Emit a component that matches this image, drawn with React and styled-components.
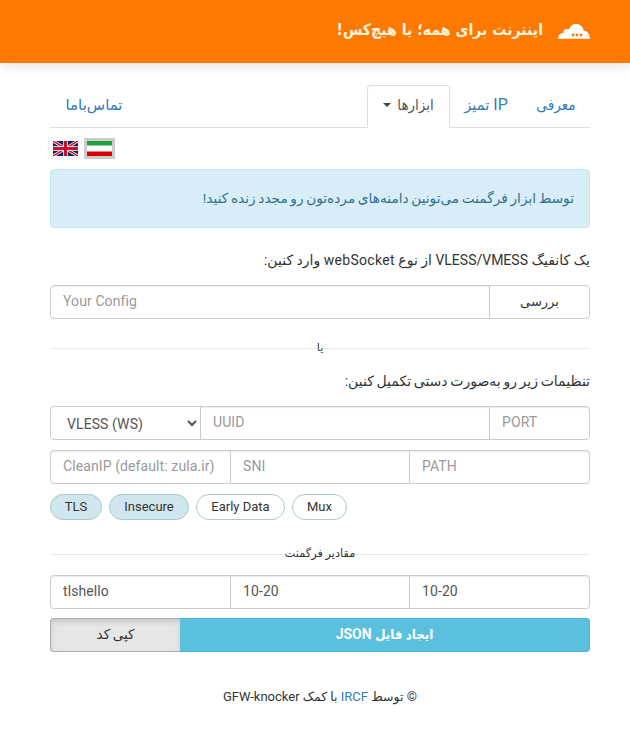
import React from "react";
import styled, { createGlobalStyle, css } from "styled-components";

const GlobalStyle = createGlobalStyle`
  *, *::before, *::after { box-sizing: border-box; }
  body {
    margin: 0;
    background: #fff;
    color: #333;
    font-family: Roboto, "DejaVu Sans", sans-serif;
    font-size: 14px;
    line-height: 20px;
  }
  input, select, button { font: inherit; margin: 0; }
`;

const Page = styled.div`
  height: 729px;
  overflow: hidden;
`;

const Header = styled.header`
  height: 63px;
  padding: 0 40px;
  display: flex;
  align-items: center;
  gap: 15px;
  background: #ff7900;
  box-shadow: 0 0 14px rgba(0, 0, 0, 0.16);
`;

const Title = styled.h1`
  margin: 0;
  padding-bottom: 3px;
  color: #fff3dc;
  font-size: 16px;
  font-weight: 700;
  line-height: 24px;
`;

const Fa = styled.span`
  font-size: ${(p) => p.$size || 14}px;
  word-spacing: ${(p) => p.$space ?? -0.8}px;
  ${(p) => p.$narrow && css`
    font-family: "DejaVu Sans Condensed", "DejaVu Sans", sans-serif;
    font-stretch: condensed;
  `}
`;

const Latin = styled.span`
  letter-spacing: 0.3px;
`;

const Container = styled.main`
  width: 540px;
  margin: 22px 40px 0 50px;
`;

const Tabs = styled.nav`
  display: flex;
  height: 43px;
  border-bottom: 1px solid #ddd;
`;

const Tab = styled.a`
  display: flex;
  align-items: center;
  justify-content: center;
  width: ${(p) => p.$width}px;
  height: 43px;
  padding-bottom: 3px;
  border: 1px solid transparent;
  border-radius: 4px 4px 0 0;
  color: #337ab7;
  font-size: 16px;
  white-space: nowrap;
  ${(p) =>
    p.$active &&
    css`
      gap: 6px;
      color: #555;
      background: #fff;
      border-color: #ddd #ddd #fff;
    `}
  ${(p) => p.$last && css`margin-right: auto;`}
`;

const Caret = styled.span`
  border: 4px solid transparent;
  border-top-color: #444;
  border-bottom: 0;
`;

const Languages = styled.div`
  display: flex;
  flex-direction: row-reverse;
  justify-content: flex-end;
  direction: ltr;
  gap: 3px;
  margin-top: 10px;
  height: 21px;
`;

const Language = styled.button`
  display: flex;
  width: 31px;
  height: 21px;
  padding: 3px;
  border: 0;
  background: ${(p) => (p.$active ? "#ccc" : "transparent")};
`;

const Alert = styled.div`
  height: 59px;
  margin-top: 10px;
  padding: 18px 15px;
  border: 1px solid #bce8f1;
  border-radius: 4px;
  background: #d9edf7;
  color: #31708f;
`;

const Label = styled.div`
  height: 24px;
  margin-top: ${(p) => p.$top}px;
  line-height: 24px;
  white-space: nowrap;
`;

const Group = styled.div`
  display: flex;
  direction: ltr;
  height: 34px;
  margin-top: ${(p) => p.$top}px;
`;

const cell = css`
  width: ${(p) => p.$width}px;
  height: 34px;
  border: 1px solid #ccc;
  border-radius: 0;
  background: #fff;
  letter-spacing: 0.1px;
  &:first-child { border-radius: 4px 0 0 4px; }
  &:last-child { border-radius: 0 4px 4px 0; }
  &:not(:first-child) { margin-left: -1px; }
`;

const Input = styled.input`
  ${cell}
  padding: 4px 12px 6px;
  color: #555;
  outline: 0;
  box-shadow: inset 0 1px 1px rgba(0, 0, 0, 0.075);
  &::placeholder { color: #999; opacity: 1; }
`;

const Select = styled.select`
  ${cell}
  padding: 6px 0 4px 12px;
  color: #555;
`;

const CheckButton = styled.button`
  ${cell}
  padding: 0 0 2px;
  color: #333;
  letter-spacing: 0;
`;

const Divider = styled.div`
  display: flex;
  align-items: center;
  height: 20px;
  margin-top: ${(p) => p.$top}px;
  white-space: nowrap;
  &::before, &::after {
    content: "";
    flex: 1;
    height: 1px;
    background: #eaeaea;
  }
`;

const Pills = styled.div`
  display: flex;
  direction: ltr;
  gap: 7px;
  margin-top: 10px;
`;

const Pill = styled.button`
  width: ${(p) => p.$width}px;
  height: 26px;
  padding: 0;
  border: 1px solid #a9c9d6;
  border-radius: 13px;
  background: ${(p) => (p.$on ? "#d1e5ed" : "#fff")};
  color: #333;
  font-size: 13px;
  line-height: 24px;
`;

const Action = styled.button`
  height: 34px;
  padding: 0 0 2px;
  border: 1px solid #adadad;
  ${(p) =>
    p.$primary
      ? css`
          width: 410px;
          border-color: #46b8da;
          border-left: 0;
          border-radius: 0 4px 4px 0;
          background: #5bc0de;
          color: #fff;
          font-weight: 700;
        `
      : css`
          width: 130px;
          border-right: 0;
          border-radius: 4px 0 0 4px;
          background: #e6e6e6;
          color: #333;
          box-shadow: inset 0 3px 5px rgba(0, 0, 0, 0.125);
        `}
`;

const Footer = styled.footer`
  margin-top: 35px;
  text-align: center;
  font-size: 13px;
  a { color: #337ab7; }
`;

const Cloud = () => (
  <svg width="32" height="16" viewBox="0 0 32 16">
    <path d="M0 14.7C0 11 2.5 8.8 5.4 8.9C5 5.8 8.4 4 10.7 5.6C12.2 2 14.6 0 18 0C22 0 24.9 2.5 25.7 6.6C29.4 6.9 31.7 10 31.8 14.7Z" fill="#fff" />
    <circle cx="15" cy="11" r="1.4" fill="#ff7900" />
    <circle cx="19" cy="11" r="1.4" fill="#ff7900" />
    <circle cx="23" cy="11" r="1.4" fill="#ff7900" />
  </svg>
);

const IranFlag = () => (
  <svg width="25" height="15" viewBox="0 0 25 15">
    <rect width="25" height="15" fill="#fff" />
    <rect width="25" height="4" fill="#239f40" />
    <rect y="4" width="25" height="1" fill="#90cf9f" />
    <rect y="10" width="25" height="1" fill="#ed8080" />
    <rect y="11" width="25" height="4" fill="#da0000" />
  </svg>
);

const UkFlag = () => (
  <svg width="25" height="15" viewBox="0 0 50 30">
    <rect width="50" height="30" fill="#012169" />
    <path d="M0 0L50 30M50 0L0 30" stroke="#fff" strokeWidth="6" />
    <path d="M0 0L25 15M50 30L25 15M50 0L25 15M0 30L25 15" stroke="#c8102e" strokeWidth="3" />
    <path d="M25 0V30M0 15H50" stroke="#fff" strokeWidth="9" />
    <path d="M25 0V30M0 15H50" stroke="#c8102e" strokeWidth="6" />
  </svg>
);

export default function App() {
  return (
    <Page dir="rtl" lang="fa">
      <GlobalStyle />
      <Header>
        <Cloud />
        <Title><Fa $size={15.7} $space={0} $narrow>اینترنت برای همه؛ یا هیچ‌کس!</Fa></Title>
      </Header>
      <Container>
        <Tabs>
          <Tab $width={68}><Fa $size={15.2} $narrow>معرفی</Fa></Tab>
          <Tab $width={72}><span>IP <Fa $size={14.7}>تمیز</Fa></span></Tab>
          <Tab $width={83} $active><Fa $size={15} $narrow>ابزارها</Fa><Caret /></Tab>
          <Tab $width={88} $last><Fa $size={15}>تماس‌باما</Fa></Tab>
        </Tabs>
        <Languages>
          <Language $active aria-label="فارسی"><IranFlag /></Language>
          <Language aria-label="English"><UkFlag /></Language>
        </Languages>
        <Alert><Fa $size={13.7}>توسط ابزار فرگمنت می‌تونین دامنه‌های مرده‌تون رو مجدد زنده کنید!</Fa></Alert>
        <Label $top={20}>
          <Fa $space={0}>یک کانفیگ</Fa> VLESS/VMESS <Fa $space={0}>از نوع</Fa> <Latin>webSocket</Latin> <Fa $space={0}>وارد کنین:</Fa>
        </Label>
        <Group $top={13}>
          <Input $width={440} placeholder="Your Config" />
          <CheckButton $width={101}><Fa $size={13}>بررسی</Fa></CheckButton>
        </Group>
        <Divider $top={19}><Fa $size={11}>یا</Fa></Divider>
        <Label $top={11}><Fa>تنظیمات زیر رو به‌صورت دستی تکمیل کنین:</Fa></Label>
        <Group $top={13}>
          <Select $width={151} defaultValue="vless">
            <option value="vless">VLESS (WS)</option>
          </Select>
          <Input $width={290} placeholder="UUID" />
          <Input $width={101} placeholder="PORT" />
        </Group>
        <Group $top={10}>
          <Input $width={181} placeholder="CleanIP (default: zula.ir)" />
          <Input $width={180} placeholder="SNI" />
          <Input $width={181} placeholder="PATH" />
        </Group>
        <Pills>
          <Pill $width={52} $on>TLS</Pill>
          <Pill $width={80} $on>Insecure</Pill>
          <Pill $width={89}>Early Data</Pill>
          <Pill $width={55}>Mux</Pill>
        </Pills>
        <Divider $top={24}><Fa $size={11.3} $space={0}>مقادیر فرگمنت</Fa></Divider>
        <Group $top={11}>
          <Input $width={181} defaultValue="tlshello" />
          <Input $width={180} defaultValue="10-20" />
          <Input $width={181} defaultValue="10-20" />
        </Group>
        <Group $top={9}>
          <Action><Fa $size={13.5}>کپی کد</Fa></Action>
          <Action $primary dir="rtl"><Fa $size={13.2} $narrow>ایجاد فایل</Fa> JSON</Action>
        </Group>
        <Footer>
          © <Fa $size={12.5} $space={0}>توسط</Fa> <a>IRCF</a> <Fa $size={12.5} $space={0}>با کمک</Fa> GFW-knocker
        </Footer>
      </Container>
    </Page>
  );
}
